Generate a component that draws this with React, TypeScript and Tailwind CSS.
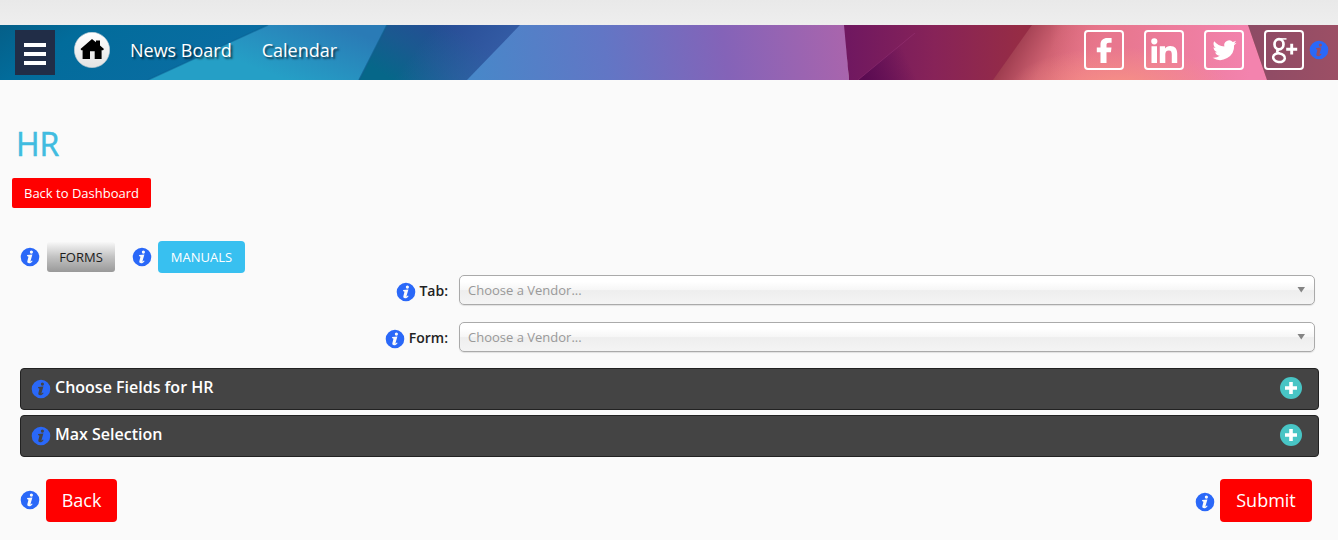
import React from "react";

function Info({ className = "" }: { className?: string }) {
  return (
    <svg viewBox="0 0 20 20" className={"h-5 w-5 shrink-0 " + className}>
      <path
        fillRule="evenodd"
        fill="#2a68f8"
        d="M10 .7a9.3 9.3 0 1 0 0 18.6a9.3 9.3 0 1 0 0-18.6ZM11.400 3.500a1.600 1.600 0 1 1-.01 3.200A1.600 1.600 0 0 1 11.400 3.500ZM7.100 8.100l5.300-.6-1.900 6.500c-.1.5.3.5.6.2l.8-.8.7.5c-.9 1.500-2.200 2.300-3.500 2.300-1.500 0-2.100-.9-1.700-2.200l1-3.900c.1-.6-.2-.8-1.300-.9Z"
      />
    </svg>
  );
}

function Banner() {
  return (
    <svg viewBox="0 0 1338 55" preserveAspectRatio="none" className="absolute inset-0 h-full w-full">
      <defs>
        <linearGradient id="b1" x1="0" y1="0" x2="1" y2="0.3">
          <stop offset="0" stopColor="#055f88" />
          <stop offset="0.3" stopColor="#026c9b" />
          <stop offset="1" stopColor="#0b6da3" />
        </linearGradient>
        <linearGradient id="b2" gradientUnits="userSpaceOnUse" x1="300" y1="60" x2="325" y2="-5">
          <stop offset="0" stopColor="#259fc6" />
          <stop offset="1" stopColor="#2a7bb6" />
        </linearGradient>
        <linearGradient id="b3" gradientUnits="userSpaceOnUse" x1="400" y1="60" x2="440" y2="-5">
          <stop offset="0" stopColor="#066789" />
          <stop offset="0.5" stopColor="#1a5990" />
          <stop offset="1" stopColor="#264c94" />
        </linearGradient>
        <linearGradient id="b3b" gradientUnits="userSpaceOnUse" x1="435" y1="0" x2="500" y2="50">
          <stop offset="0" stopColor="#3d66b0" stopOpacity="0" />
          <stop offset="1" stopColor="#3d66b0" stopOpacity=".7" />
        </linearGradient>
        <linearGradient id="b4" gradientUnits="userSpaceOnUse" x1="470" y1="55" x2="860" y2="0">
          <stop offset="0" stopColor="#4788c9" />
          <stop offset="0.35" stopColor="#6276c5" />
          <stop offset="0.65" stopColor="#8463b8" />
          <stop offset="1" stopColor="#ae65ab" />
        </linearGradient>
        <linearGradient id="b5" gradientUnits="userSpaceOnUse" x1="849" y1="0" x2="1020" y2="0">
          <stop offset="0" stopColor="#701860" />
          <stop offset="0.5" stopColor="#872358" />
          <stop offset="1" stopColor="#962c45" />
        </linearGradient>
        <linearGradient id="b6" gradientUnits="userSpaceOnUse" x1="865" y1="55" x2="908" y2="35">
          <stop offset="0" stopColor="#5a0b51" />
          <stop offset="1" stopColor="#5a0b51" stopOpacity="0" />
        </linearGradient>
        <linearGradient id="b7" gradientUnits="userSpaceOnUse" x1="1008" y1="20" x2="1080" y2="58">
          <stop offset="0" stopColor="#98384b" />
          <stop offset="0.5" stopColor="#cf6272" />
          <stop offset="1" stopColor="#e97586" />
        </linearGradient>
        <linearGradient id="b8" gradientUnits="userSpaceOnUse" x1="1050" y1="0" x2="1250" y2="0">
          <stop offset="0" stopColor="#e8778f" stopOpacity="0" />
          <stop offset="0.35" stopColor="#e8778f" />
          <stop offset="1" stopColor="#f383ae" />
        </linearGradient>
        <radialGradient id="b9" gradientUnits="userSpaceOnUse" cx="0" cy="0" r="1" gradientTransform="translate(1120 62) scale(110 40)">
          <stop offset="0" stopColor="#f99485" stopOpacity=".9" />
          <stop offset="1" stopColor="#f99485" stopOpacity="0" />
        </radialGradient>
        <linearGradient id="b10" x1="0" y1="0" x2="1" y2="0">
          <stop offset="0" stopColor="#8d4b65" />
          <stop offset="1" stopColor="#9c4f65" />
        </linearGradient>
      </defs>
      <path fill="url(#b1)" d="M0 0H270V55H0Z" />
      <path fill="url(#b2)" d="M268 0H390V55H148Z" />
      <path stroke="#0a6092" strokeOpacity=".5" strokeWidth="1.5" d="M268 0 148 55" />
      <path fill="url(#b3)" d="M387 0H522V55H359Z" />
      <path fill="url(#b3b)" d="M387 0H522V55H359Z" />
      <path stroke="#10608e" strokeOpacity=".7" strokeWidth="1.5" d="M387 0 359 55" />
      <path fill="url(#b4)" d="M520 0H845L849 55H467Z" />
      <path fill="url(#b5)" d="M844 0H1050V55H849Z" />
      <path fill="url(#b6)" d="M924 0H975V55H858Z" />
      <path stroke="#a03b80" strokeOpacity=".4" d="M915 8 858 55" />
      <path fill="url(#b7)" d="M1032 0H1268V55H993Z" />
      <path fill="url(#b8)" d="M1050 0H1248L1267 55H1050Z" />
      <path fill="url(#b9)" d="M1010 0H1248L1267 55H1010Z" />
      <path fill="url(#b10)" d="M1248 0H1338V55H1267Z" />
    </svg>
  );
}

function Social({ children }: { children: React.ReactNode }) {
  return (
    <a className="h-10 w-10 rounded-[4px] border-2 border-white">
      <svg viewBox="0 0 36 36" className="h-9 w-9" fill="white">
        {children}
      </svg>
    </a>
  );
}

function Select() {
  return (
    <div className="flex h-[30px] w-[856px] items-center justify-between rounded-[5px] border border-[#aaa] bg-[linear-gradient(#fff_20%,#f6f6f6_50%,#eee_52%,#f4f4f4_100%)] pr-[9px] pl-2 text-[13px] text-[#999] shadow-[0_1px_1px_rgba(0,0,0,0.1)]">
      <span className="pt-0.5">Choose a Vendor...</span>
      <svg viewBox="0 0 8 6" className="h-1.5 w-2" fill="#848484">
        <path d="M.5 0H8L4.250 5.500Z" />
      </svg>
    </div>
  );
}

function Field({ label }: { label: string }) {
  return (
    <div className="flex h-[30px] items-center">
      <div className="flex w-[448px] items-center justify-end gap-[3.5px] text-sm font-semibold text-[#222]">
        <Info className="mt-1" />
        <span className="pt-0.5">{label}</span>
      </div>
      <div className="ml-[11px]">
        <Select />
      </div>
    </div>
  );
}

function Panel({ title }: { title: string }) {
  return (
    <div className="flex h-[42px] items-center rounded-[4px] border border-[#222] bg-[#444] pr-4 pl-2.5 text-base font-semibold text-white">
      <Info />
      <span className="-mt-1 ml-1 grow">{title}</span>
      <svg viewBox="0 0 22 22" className="-mt-0.5 h-[22px] w-[22px]">
        <circle cx="11" cy="11" r="11" fill="#48c5c5" />
        <path d="M11 5V17M5 11H17" stroke="white" strokeWidth="3.6" />
      </svg>
    </div>
  );
}

export default function App() {
  return (
    <div className="h-[540px] w-[1338px] overflow-hidden bg-[#fafafa] font-['Open_Sans',sans-serif]">
      <div className="h-[25px] bg-[linear-gradient(#e9e9e9,#eeeeee)]" />
      <header className="relative h-[55px]">
        <Banner />
        <div className="relative flex h-full">
          <button className="mt-[5px] ml-[15px] flex h-[45px] w-10 flex-col items-center gap-[5px] bg-[#212d47] pt-[13px]">
            <span className="h-1 w-[22px] bg-white" />
            <span className="h-1 w-[22px] bg-white" />
            <span className="h-1 w-[22px] bg-white" />
          </button>
          <svg viewBox="0 0 36 36" className="mt-[7px] ml-[19px] h-9 w-9">
            <defs>
              <linearGradient id="home" x1="0" y1="0" x2="0" y2="1">
                <stop offset="0" stopColor="#fff" />
                <stop offset="1" stopColor="#e3e3e3" />
              </linearGradient>
            </defs>
            <circle cx="18" cy="18" r="17.700" fill="url(#home)" stroke="#b8c8d0" strokeWidth=".6" />
            <path d="M18 7 22 10.200V8.600H26V13.400L30 17 29 18.300H27.600V27H20.700V19.300H16V27H8.600V18.300H7.400L6.500 17Z" fill="#000" />
          </svg>
          <nav className="mt-[13px] ml-5 flex gap-[30px] text-[18px] leading-[25px] text-white [text-shadow:2px_2px_2px_rgba(0,0,0,0.6)]">
            <a>News Board</a>
            <a>Calendar</a>
          </nav>
          <div className="mt-[5px] mr-[9px] ml-auto flex gap-5">
            <Social>
              <path d="M14.500 31V20.200H10.800V15.600H14.500V12.600C14.500 8.200 17.200 6 21.400 6H25.600V10.800H23C21.200 10.800 20.500 11.600 20.500 13V15.600H25.500L24.900 20.200H20.500V31Z" />
            </Social>
            <Social>
              <path d="M5.500 14.300H11V31H5.500ZM8.300 6.200A3.100 3.100 0 1 1 8.290 12.400 3.100 3.100 0 0 1 8.300 6.200ZM13.800 14.300H19V16.600C20 15 21.700 13.900 24.200 13.900 29.200 13.900 31.200 17 31.200 21.500V31H25.800V22.500C25.800 20 25.200 18.400 22.900 18.400 20.300 18.400 19.300 20 19.300 22.500V31H13.800Z" />
            </Social>
            <Social>
              <path transform="translate(6 6.500)" d="M24.600 4.200c-.9.400-1.800.7-2.800.8 1-.6 1.800-1.600 2.100-2.700-1 .600-2 .900-3.100 1.200a4.900 4.900 0 0 0-8.400 4.500C8.200 7.800 4.700 5.800 2.200 2.800a4.900 4.900 0 0 0 1.500 6.600c-.8 0-1.600-.3-2.200-.6 0 2.400 1.700 4.400 3.900 4.900-.7.200-1.500.2-2.200.1.600 2 2.400 3.400 4.600 3.400A9.900 9.900 0 0 1 .5 19.200 14 14 0 0 0 22.100 6.700c1-.7 1.800-1.500 2.500-2.500Z" />
            </Social>
            <Social>
              <g fill="none" stroke="white">
                <ellipse cx="13" cy="12.300" rx="4.500" ry="5.100" strokeWidth="2.700" />
                <path d="M13 17.800C10.200 18.600 10.600 20.400 13.500 21.300" strokeWidth="2.300" />
                <ellipse cx="13" cy="25.700" rx="5.900" ry="4.300" strokeWidth="2.500" transform="rotate(8 13 25.700)" />
                <path d="M12.500 6.900H20.500" strokeWidth="1.500" />
                <path d="M25.700 11.800V22.600M20.200 17.200H31.200" strokeWidth="2.900" />
              </g>
            </Social>
            <Info className="mt-2.5 -ml-[15px]" />
          </div>
        </div>
      </header>

      <main>
        <h1 className="mt-[42px] ml-4 text-[32px] leading-[44px] font-medium text-[#40bce0] [-webkit-text-stroke:0.5px_#40bce0]">HR</h1>
        <button className="mt-3 ml-3 flex h-[30px] w-[139px] items-center justify-center rounded-[2px] bg-[#f00] pt-px text-[13px] text-white">
          Back to Dashboard
        </button>
        <div className="mt-[33px] flex h-8 items-center pl-5">
          <Info />
          <button className="ml-[7px] h-[30px] w-[68px] rounded-[3px] bg-[linear-gradient(#f8f8f8,#c2c2c2_50%,#999)] pt-0.5 text-[13px] text-[#1c1c1c]">FORMS</button>
          <Info className="ml-[17px]" />
          <button className="ml-1.5 h-8 w-[87px] rounded-[4px] bg-[#38c0f0] pt-0.5 text-[13px] text-white">MANUALS</button>
        </div>
        <div className="mt-0.5 flex flex-col gap-[17px]">
          <Field label="Tab:" />
          <Field label="Form:" />
        </div>
        <div className="mt-4 mr-[19px] ml-5 flex flex-col gap-[5px]">
          <Panel title="Choose Fields for HR" />
          <Panel title="Max Selection" />
        </div>
        <div className="mt-[22px] flex h-[43px] items-center pr-[26px] pl-5 text-[18px] text-white">
          <Info className="-mt-px" />
          <button className="ml-1.5 h-[43px] w-[71px] rounded-[4px] bg-[#f00]">Back</button>
          <Info className="mt-0.5 ml-auto" />
          <button className="ml-[5px] h-[43px] w-[92px] rounded-[4px] bg-[#f00]">Submit</button>
        </div>
      </main>
    </div>
  );
}
